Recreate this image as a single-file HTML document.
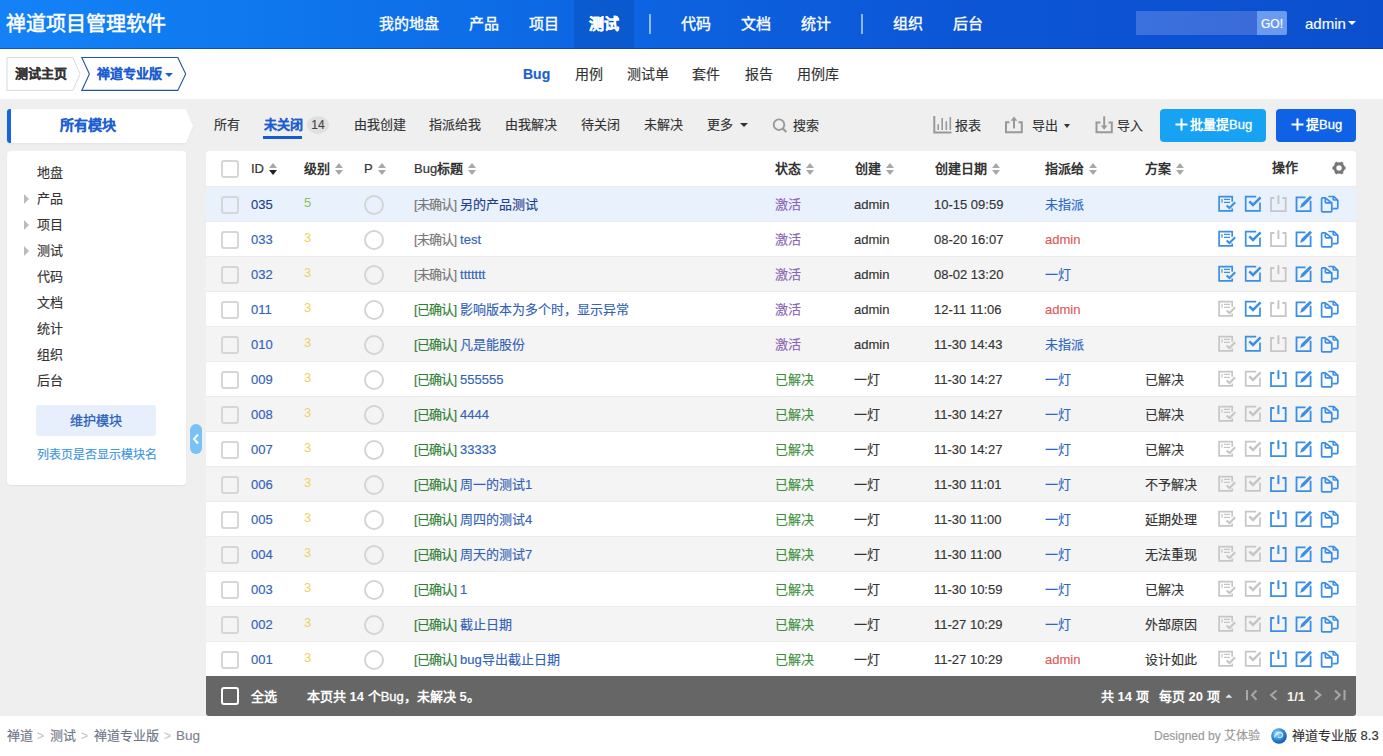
<!DOCTYPE html>
<html lang="zh-CN"><head><meta charset="utf-8">
<style>
*{box-sizing:border-box;margin:0;padding:0}
html,body{width:1383px;height:756px;overflow:hidden;background:#efefef;font-family:"Liberation Sans",sans-serif;font-size:13px;color:#333;-webkit-text-stroke-width:0.15px}
.a{position:absolute;white-space:nowrap}
#hd{position:absolute;left:0;top:0;width:1383px;height:49px;box-shadow:inset 0 -1px 0 rgba(0,20,80,.35);background:linear-gradient(90deg,#1482f6 0%,#0f7af0 15%,#0e72eb 27%,#0d62e0 48%,#0c56d6 70%,#0b4fce 100%)}
#hd .title{position:absolute;left:6px;top:11px;color:#fff;font-size:20px;line-height:26px;font-weight:normal;-webkit-text-stroke:0.5px #fff}
#hd .nav{position:absolute;top:0;height:48px;line-height:47px;color:#fff;font-size:15px;font-weight:normal;-webkit-text-stroke:0.35px #fff;text-align:center}
#hd .sep{position:absolute;top:14px;width:1.5px;height:20px;background:rgba(255,255,255,.55)}
#sub{position:absolute;left:0;top:49px;width:1383px;height:50px;background:#fff}
.sn{position:absolute;top:16px;font-size:14px;line-height:18px;color:#333}
.fb{position:absolute;top:116px;font-size:13px;line-height:18px;color:#333}
.tree{position:absolute;left:37px;font-size:13px;line-height:18px;color:#333}
.tri{position:absolute;left:24px;width:0;height:0;border-left:5px solid #bbb;border-top:5px solid transparent;border-bottom:5px solid transparent}
#tbl{position:absolute;left:206px;top:151px;width:1150px;height:565px;background:#fff;border-radius:3px 3px 3px 3px;overflow:hidden}
.th{position:absolute;top:9px;font-weight:bold;font-size:13px;line-height:18px;color:#333;-webkit-text-stroke-width:0}
.srt{display:inline-block;position:relative;width:9px;height:12px;vertical-align:-2px;margin-left:5px}
.srt:before{content:"";position:absolute;left:0;top:0;border-left:4.5px solid transparent;border-right:4.5px solid transparent;border-bottom:5px solid #a8a8a8}
.srt:after{content:"";position:absolute;left:0;top:7px;border-left:4.5px solid transparent;border-right:4.5px solid transparent;border-top:5px solid #a8a8a8}
.srt.d:after{border-top-color:#222}
.row{position:absolute;left:0;width:1150px;height:35px;border-top:1px solid #ebebeb}
.row .t{position:absolute;top:9px;line-height:18px;font-size:13px;-webkit-text-stroke-width:0.15px}
.cb{position:absolute;width:18px;height:18px;border:2px solid #d6d6d6;border-radius:3px;background:transparent}
.pc{position:absolute;left:158px;top:8px;width:20px;height:20px;border:2px solid #d4d4d4;border-radius:50%}
.ai{position:absolute}
#ft{position:absolute;left:0;top:525px;width:1150px;height:40px;background:#666;color:#fff;font-weight:bold;-webkit-text-stroke-width:0}
#ft .t{position:absolute;top:12px;line-height:18px;font-size:13px}
</style></head><body>
<div id="hd">
  <div class="title">禅道项目管理软件</div>
  <div class="nav" style="left:364px;width:90px">我的地盘</div>
  <div class="nav" style="left:454px;width:60px">产品</div>
  <div class="nav" style="left:514px;width:60px">项目</div>
  <div class="nav" style="left:574px;width:60px;font-weight:bold;background:rgba(0,40,120,.18)">测试</div>
  <div class="sep" style="left:649px"></div>
  <div class="nav" style="left:666px;width:60px">代码</div>
  <div class="nav" style="left:726px;width:60px">文档</div>
  <div class="nav" style="left:786px;width:60px">统计</div>
  <div class="sep" style="left:861px"></div>
  <div class="nav" style="left:878px;width:60px">组织</div>
  <div class="nav" style="left:938px;width:60px">后台</div>
  <div class="a" style="left:1136px;top:11px;width:121px;height:24px;background:linear-gradient(90deg,#3a71de,#3b6bd9)"></div>
  <div class="a" style="left:1257px;top:11px;width:30px;height:24px;background:#6b9bef;border-radius:0 2px 2px 0;color:#fff;font-size:12px;line-height:26px;text-align:center;-webkit-text-stroke:0.2px #fff">GO!</div>
  <div class="a" style="left:1305px;top:14px;color:#fff;font-size:15px;line-height:20px">admin</div>
  <div class="a" style="left:1348px;top:21px;border-left:4px solid transparent;border-right:4px solid transparent;border-top:4px solid #fff"></div>
</div>
<div id="sub">
  <svg class="a" style="left:6px;top:8px" width="184" height="35" viewBox="0 0 184 35">
    <path d="M1 0.5H66.8L74.1 16.9L66.8 33.4H1Z" fill="#fff" stroke="#d9d9d9" stroke-width="1"/>
    <path d="M75.8 0.5H171.8L179.7 16.9L171.8 33.4H75.8L83.4 16.9Z" fill="#fff" stroke="#2352a8" stroke-width="1.1"/>
  </svg>
  <div class="a" style="left:15px;top:16px;font-size:13px;line-height:18px;font-weight:bold;color:#333">测试主页</div>
  <div class="a" style="left:97px;top:16px;font-size:13px;line-height:18px;font-weight:bold;color:#1c5ed2">禅道专业版</div>
  <div class="a" style="left:165px;top:24px;border-left:4px solid transparent;border-right:4px solid transparent;border-top:4px solid #1c5ed2"></div>
  <div class="sn" style="left:523px;color:#1c5ed2;font-weight:bold">Bug</div>
  <div class="sn" style="left:575px">用例</div>
  <div class="sn" style="left:627px">测试单</div>
  <div class="sn" style="left:692px">套件</div>
  <div class="sn" style="left:745px">报告</div>
  <div class="sn" style="left:797px">用例库</div>
</div>

<!-- sidebar -->
<svg class="a" style="left:6px;top:108px;filter:drop-shadow(0 1px 1px rgba(0,0,0,.05))" width="190" height="37" viewBox="0 0 190 37">
  <path d="M4 1H180L187 18L180 35H4Q1 35 1 32V4Q1 1 4 1Z" fill="#fff"/>
  <path d="M4 1H5V35H4Q1 35 1 32V4Q1 1 4 1Z" fill="#1763e2"/>
</svg>
<div class="a" style="left:60px;top:116px;font-size:14px;line-height:18px;font-weight:bold;color:#1c5ed2">所有模块</div>
<div class="a" style="left:7px;top:151px;width:179px;height:334px;background:#fff;border-radius:4px;box-shadow:0 1px 2px rgba(0,0,0,.06)"></div>
<div class="tree" style="top:164px">地盘</div>
<div class="tri" style="top:194px"></div><div class="tree" style="top:190px">产品</div>
<div class="tri" style="top:220px"></div><div class="tree" style="top:216px">项目</div>
<div class="tri" style="top:246px"></div><div class="tree" style="top:242px">测试</div>
<div class="tree" style="top:268px">代码</div>
<div class="tree" style="top:294px">文档</div>
<div class="tree" style="top:320px">统计</div>
<div class="tree" style="top:346px">组织</div>
<div class="tree" style="top:372px">后台</div>
<div class="a" style="left:36px;top:405px;width:120px;height:31px;background:#e6effb;border-radius:3px;text-align:center;line-height:31px;font-size:13px;color:#2a5fba;-webkit-text-stroke:0.3px #2a5fba">维护模块</div>
<div class="a" style="left:37px;top:447px;font-size:12px;line-height:16px;color:#3c96e0">列表页是否显示模块名</div>
<div class="a" style="left:190px;top:424px;width:12px;height:30px;background:#78c2f5;border-radius:6px"></div>
<svg class="a" style="left:192px;top:433px" width="8" height="12" viewBox="0 0 8 12"><path d="M6 1.5L2 6L6 10.5" fill="none" stroke="#fff" stroke-width="2"/></svg>

<!-- filter bar -->
<div class="fb" style="left:214px">所有</div>
<div class="fb" style="left:264px;color:#1c5ed2;font-weight:bold">未关闭</div>
<div class="a" style="left:263px;top:136px;width:39px;height:2.5px;background:#1a5ad0"></div>
<div class="a" style="left:307px;top:116px;width:22px;height:18px;border-radius:50%;background:#e0e0e0;color:#444;font-size:12px;line-height:18px;text-align:center">14</div>
<div class="fb" style="left:354px">由我创建</div>
<div class="fb" style="left:429px">指派给我</div>
<div class="fb" style="left:505px">由我解决</div>
<div class="fb" style="left:581px">待关闭</div>
<div class="fb" style="left:644px">未解决</div>
<div class="fb" style="left:707px">更多</div>
<div class="a" style="left:739.5px;top:123px;border-left:4px solid transparent;border-right:4px solid transparent;border-top:4px solid #333"></div>
<svg class="a" style="left:770px;top:115px" width="20" height="20" viewBox="0 0 20 20"><circle cx="9" cy="9.7" r="5.3" fill="none" stroke="#999" stroke-width="1.9"/><path d="M12.8 13.5L16.3 17" stroke="#999" stroke-width="2.2"/></svg>
<div class="fb" style="left:793px;top:117px">搜索</div>

<svg class="a" style="left:925px;top:108px" width="240" height="36" viewBox="925 108 240 36" fill="none" stroke="#999"><path d="M934.3 116V132.4H951.5" stroke-width="2"/><path d="M938.2 124.2V130M942.2 118V130M946.3 121.2V130M950.3 117V130" stroke-width="1.6"/><path d="M1009.5 122.3H1006V132.3H1021.8V122.3H1018.5" stroke-width="2"/><path d="M1014 118.5V128.5" stroke-width="2"/><path d="M1010.6 120.8L1014 116.6L1017.4 120.8Z" fill="#999" stroke="none"/><path d="M1100.5 122.4H1096.5V132.3H1111.8V122.4H1108.5" stroke-width="2"/><path d="M1104.2 116.3V127" stroke-width="2"/><path d="M1100.8 125.6H1107.6L1104.2 129.8Z" fill="#999" stroke="none"/></svg>
<div class="fb" style="left:955px;top:117px">报表</div>

<div class="fb" style="left:1032px;top:117px">导出</div>
<div class="a" style="left:1064px;top:124px;border-left:3.5px solid transparent;border-right:3.5px solid transparent;border-top:4px solid #333"></div>

<div class="fb" style="left:1117px;top:117px">导入</div>
<div class="a" style="left:1160px;top:109px;width:106px;height:33px;background:#17a2f3;border-radius:4px"></div>
<svg class="a" style="left:1175px;top:118px" width="13" height="13" viewBox="0 0 13 13"><path d="M6.5 0.5V12.5M0.5 6.5H12.5" stroke="#fff" stroke-width="2"/></svg>
<div class="a" style="left:1190px;top:116px;color:#fff;font-size:13px;line-height:18px;font-weight:bold;-webkit-text-stroke-width:0">批量提<span style="font-weight:normal;-webkit-text-stroke:0.3px #fff">Bug</span></div>
<div class="a" style="left:1276px;top:109px;width:80px;height:33px;background:#0f62e6;border-radius:4px"></div>
<svg class="a" style="left:1291px;top:118px" width="13" height="13" viewBox="0 0 13 13"><path d="M6.5 0.5V12.5M0.5 6.5H12.5" stroke="#fff" stroke-width="2"/></svg>
<div class="a" style="left:1306px;top:116px;color:#fff;font-size:13px;line-height:18px;font-weight:bold;-webkit-text-stroke-width:0">提<span style="font-weight:normal;-webkit-text-stroke:0.3px #fff">Bug</span></div>

<!-- table -->
<div id="tbl">
  <div class="cb" style="left:15px;top:9px"></div>
  <div class="th" style="left:45px"><span style="font-weight:normal;-webkit-text-stroke:0.2px #333">ID</span><span class="srt d"></span></div>
  <div class="th" style="left:98px">级别<span class="srt"></span></div>
  <div class="th" style="left:158px"><span style="font-weight:normal;-webkit-text-stroke:0.2px #333">P</span><span class="srt"></span></div>
  <div class="th" style="left:208px"><span style="font-weight:normal;-webkit-text-stroke:0.2px #333">Bug</span>标题<span class="srt"></span></div>
  <div class="th" style="left:569px">状态<span class="srt"></span></div>
  <div class="th" style="left:649px">创建<span class="srt"></span></div>
  <div class="th" style="left:729px">创建日期<span class="srt"></span></div>
  <div class="th" style="left:839px">指派给<span class="srt"></span></div>
  <div class="th" style="left:939px">方案<span class="srt"></span></div>
  <div class="th" style="left:1066px;top:8px">操作</div>
  <svg class="a" style="left:1125px;top:9px" width="16" height="16" viewBox="0 0 16 16"><circle cx="8" cy="8" r="4.2" fill="none" stroke="#777" stroke-width="3"/><path d="M12.00 8.00L14.60 8.00M10.00 11.46L11.30 13.72M6.00 11.46L4.70 13.72M4.00 8.00L1.40 8.00M6.00 4.54L4.70 2.28M10.00 4.54L11.30 2.28" stroke="#777" stroke-width="3"/></svg>
<div class="row" style="top:35px;background:#e9f2fc">
<div class="cb" style="left:15px;top:9px"></div>
<div class="t" style="left:45px;color:#1f3d8f">035</div>
<div class="t" style="left:98px;color:#8cbf5a;font-size:13px;top:7px;-webkit-text-stroke-width:0">5</div>
<div class="pc"></div>
<div class="t" style="left:208px"><span style="color:#777;letter-spacing:-0.75px">[未确认]</span> <span style="color:#1f3d8f">另的产品测试</span></div>
<div class="t" style="left:569px;color:#8a64b8">激活</div>
<div class="t" style="left:648px;color:#333">admin</div>
<div class="t" style="left:728px;color:#333">10-15 09:59</div>
<div class="t" style="left:839px;color:#2a66c8">未指派</div>
<div class="t" style="left:939px;color:#333"></div>
<svg class="ai" style="left:1009px;top:-1px" width="130" height="35" viewBox="1215 186 130 35"><g fill="none" stroke="#3b8ee6"><path d="M1232.2 201.8V196.7H1219.1V210.9H1232.2V208.6" stroke-width="1.7"/><path d="M1222 199V202.8" stroke-width="1.2"/><path d="M1224 199.4H1230M1224 202.4H1230" stroke-width="1.3"/><path d="M1226.6 205.4L1229.5 208.1L1235.2 202.3" stroke-width="2.1"/></g><g fill="none" stroke="#3b8ee6"><path d="M1256.2 196.7H1245.7V210.9H1260V202.5" stroke-width="1.7"/><path d="M1249.3 201.4L1253 205L1260.6 197.4" stroke-width="2.5"/></g><g fill="none" stroke="#c6c6c6"><path d="M1274.3 198H1271V211.2H1285.7V198H1282.4" stroke-width="1.8"/><path d="M1278.4 195.2V204.1" stroke-width="2"/></g><g fill="none" stroke="#3b8ee6"><path d="M1305.5 197.4H1296.5V211.2H1310.6V200.7" stroke-width="1.8"/><path d="M1300 208L1301.5 203.8L1310 195.7L1312 197.7L1303.8 206.2Z" fill="#3b8ee6" stroke="none"/></g><g fill="none" stroke="#3b8ee6" stroke-linejoin="round"><path d="M1325.3 197.8H1322.6Q1321.6 197.8 1321.6 198.8V210.8Q1321.6 211.8 1322.6 211.8H1330.8Q1331.8 211.8 1331.8 210.8V203L1325.3 197.8Z" stroke-width="1.7"/><path d="M1325.3 198.5V201.8Q1325.3 202.8 1326.3 202.8H1331.5" stroke-width="1.7"/><path d="M1328.4 196.5H1333.9L1337.8 200.3V207.6Q1337.8 208.6 1336.8 208.6H1332.5" stroke-width="1.7"/><path d="M1333.2 197V199.3Q1333.2 200 1334 200H1337.4" stroke-width="1.6"/></g></svg>
</div>
<div class="row" style="top:70px;background:#fff">
<div class="cb" style="left:15px;top:9px"></div>
<div class="t" style="left:45px;color:#3262b8">033</div>
<div class="t" style="left:98px;color:#f1d060;font-size:13px;top:7px;-webkit-text-stroke-width:0">3</div>
<div class="pc"></div>
<div class="t" style="left:208px"><span style="color:#777;letter-spacing:-0.75px">[未确认]</span> <span style="color:#3262b8">test</span></div>
<div class="t" style="left:569px;color:#8a64b8">激活</div>
<div class="t" style="left:648px;color:#333">admin</div>
<div class="t" style="left:728px;color:#333">08-20 16:07</div>
<div class="t" style="left:839px;color:#e05a5a">admin</div>
<div class="t" style="left:939px;color:#333"></div>
<svg class="ai" style="left:1009px;top:-1px" width="130" height="35" viewBox="1215 186 130 35"><g fill="none" stroke="#3b8ee6"><path d="M1232.2 201.8V196.7H1219.1V210.9H1232.2V208.6" stroke-width="1.7"/><path d="M1222 199V202.8" stroke-width="1.2"/><path d="M1224 199.4H1230M1224 202.4H1230" stroke-width="1.3"/><path d="M1226.6 205.4L1229.5 208.1L1235.2 202.3" stroke-width="2.1"/></g><g fill="none" stroke="#3b8ee6"><path d="M1256.2 196.7H1245.7V210.9H1260V202.5" stroke-width="1.7"/><path d="M1249.3 201.4L1253 205L1260.6 197.4" stroke-width="2.5"/></g><g fill="none" stroke="#c6c6c6"><path d="M1274.3 198H1271V211.2H1285.7V198H1282.4" stroke-width="1.8"/><path d="M1278.4 195.2V204.1" stroke-width="2"/></g><g fill="none" stroke="#3b8ee6"><path d="M1305.5 197.4H1296.5V211.2H1310.6V200.7" stroke-width="1.8"/><path d="M1300 208L1301.5 203.8L1310 195.7L1312 197.7L1303.8 206.2Z" fill="#3b8ee6" stroke="none"/></g><g fill="none" stroke="#3b8ee6" stroke-linejoin="round"><path d="M1325.3 197.8H1322.6Q1321.6 197.8 1321.6 198.8V210.8Q1321.6 211.8 1322.6 211.8H1330.8Q1331.8 211.8 1331.8 210.8V203L1325.3 197.8Z" stroke-width="1.7"/><path d="M1325.3 198.5V201.8Q1325.3 202.8 1326.3 202.8H1331.5" stroke-width="1.7"/><path d="M1328.4 196.5H1333.9L1337.8 200.3V207.6Q1337.8 208.6 1336.8 208.6H1332.5" stroke-width="1.7"/><path d="M1333.2 197V199.3Q1333.2 200 1334 200H1337.4" stroke-width="1.6"/></g></svg>
</div>
<div class="row" style="top:105px;background:#f4f4f4">
<div class="cb" style="left:15px;top:9px"></div>
<div class="t" style="left:45px;color:#3262b8">032</div>
<div class="t" style="left:98px;color:#f1d060;font-size:13px;top:7px;-webkit-text-stroke-width:0">3</div>
<div class="pc"></div>
<div class="t" style="left:208px"><span style="color:#777;letter-spacing:-0.75px">[未确认]</span> <span style="color:#3262b8">ttttttt</span></div>
<div class="t" style="left:569px;color:#8a64b8">激活</div>
<div class="t" style="left:648px;color:#333">admin</div>
<div class="t" style="left:728px;color:#333">08-02 13:20</div>
<div class="t" style="left:839px;color:#2a66c8">一灯</div>
<div class="t" style="left:939px;color:#333"></div>
<svg class="ai" style="left:1009px;top:-1px" width="130" height="35" viewBox="1215 186 130 35"><g fill="none" stroke="#3b8ee6"><path d="M1232.2 201.8V196.7H1219.1V210.9H1232.2V208.6" stroke-width="1.7"/><path d="M1222 199V202.8" stroke-width="1.2"/><path d="M1224 199.4H1230M1224 202.4H1230" stroke-width="1.3"/><path d="M1226.6 205.4L1229.5 208.1L1235.2 202.3" stroke-width="2.1"/></g><g fill="none" stroke="#3b8ee6"><path d="M1256.2 196.7H1245.7V210.9H1260V202.5" stroke-width="1.7"/><path d="M1249.3 201.4L1253 205L1260.6 197.4" stroke-width="2.5"/></g><g fill="none" stroke="#c6c6c6"><path d="M1274.3 198H1271V211.2H1285.7V198H1282.4" stroke-width="1.8"/><path d="M1278.4 195.2V204.1" stroke-width="2"/></g><g fill="none" stroke="#3b8ee6"><path d="M1305.5 197.4H1296.5V211.2H1310.6V200.7" stroke-width="1.8"/><path d="M1300 208L1301.5 203.8L1310 195.7L1312 197.7L1303.8 206.2Z" fill="#3b8ee6" stroke="none"/></g><g fill="none" stroke="#3b8ee6" stroke-linejoin="round"><path d="M1325.3 197.8H1322.6Q1321.6 197.8 1321.6 198.8V210.8Q1321.6 211.8 1322.6 211.8H1330.8Q1331.8 211.8 1331.8 210.8V203L1325.3 197.8Z" stroke-width="1.7"/><path d="M1325.3 198.5V201.8Q1325.3 202.8 1326.3 202.8H1331.5" stroke-width="1.7"/><path d="M1328.4 196.5H1333.9L1337.8 200.3V207.6Q1337.8 208.6 1336.8 208.6H1332.5" stroke-width="1.7"/><path d="M1333.2 197V199.3Q1333.2 200 1334 200H1337.4" stroke-width="1.6"/></g></svg>
</div>
<div class="row" style="top:140px;background:#fff">
<div class="cb" style="left:15px;top:9px"></div>
<div class="t" style="left:45px;color:#3262b8">011</div>
<div class="t" style="left:98px;color:#f1d060;font-size:13px;top:7px;-webkit-text-stroke-width:0">3</div>
<div class="pc"></div>
<div class="t" style="left:208px"><span style="color:#2f7f33;letter-spacing:-0.75px">[已确认]</span> <span style="color:#3262b8">影响版本为多个时，显示异常</span></div>
<div class="t" style="left:569px;color:#8a64b8">激活</div>
<div class="t" style="left:648px;color:#333">admin</div>
<div class="t" style="left:728px;color:#333">12-11 11:06</div>
<div class="t" style="left:839px;color:#e05a5a">admin</div>
<div class="t" style="left:939px;color:#333"></div>
<svg class="ai" style="left:1009px;top:-1px" width="130" height="35" viewBox="1215 186 130 35"><g fill="none" stroke="#c6c6c6"><path d="M1232.2 201.8V196.7H1219.1V210.9H1232.2V208.6" stroke-width="1.7"/><path d="M1222 199V202.8" stroke-width="1.2"/><path d="M1224 199.4H1230M1224 202.4H1230" stroke-width="1.3"/><path d="M1226.6 205.4L1229.5 208.1L1235.2 202.3" stroke-width="2.1"/></g><g fill="none" stroke="#3b8ee6"><path d="M1256.2 196.7H1245.7V210.9H1260V202.5" stroke-width="1.7"/><path d="M1249.3 201.4L1253 205L1260.6 197.4" stroke-width="2.5"/></g><g fill="none" stroke="#c6c6c6"><path d="M1274.3 198H1271V211.2H1285.7V198H1282.4" stroke-width="1.8"/><path d="M1278.4 195.2V204.1" stroke-width="2"/></g><g fill="none" stroke="#3b8ee6"><path d="M1305.5 197.4H1296.5V211.2H1310.6V200.7" stroke-width="1.8"/><path d="M1300 208L1301.5 203.8L1310 195.7L1312 197.7L1303.8 206.2Z" fill="#3b8ee6" stroke="none"/></g><g fill="none" stroke="#3b8ee6" stroke-linejoin="round"><path d="M1325.3 197.8H1322.6Q1321.6 197.8 1321.6 198.8V210.8Q1321.6 211.8 1322.6 211.8H1330.8Q1331.8 211.8 1331.8 210.8V203L1325.3 197.8Z" stroke-width="1.7"/><path d="M1325.3 198.5V201.8Q1325.3 202.8 1326.3 202.8H1331.5" stroke-width="1.7"/><path d="M1328.4 196.5H1333.9L1337.8 200.3V207.6Q1337.8 208.6 1336.8 208.6H1332.5" stroke-width="1.7"/><path d="M1333.2 197V199.3Q1333.2 200 1334 200H1337.4" stroke-width="1.6"/></g></svg>
</div>
<div class="row" style="top:175px;background:#f4f4f4">
<div class="cb" style="left:15px;top:9px"></div>
<div class="t" style="left:45px;color:#3262b8">010</div>
<div class="t" style="left:98px;color:#f1d060;font-size:13px;top:7px;-webkit-text-stroke-width:0">3</div>
<div class="pc"></div>
<div class="t" style="left:208px"><span style="color:#2f7f33;letter-spacing:-0.75px">[已确认]</span> <span style="color:#3262b8">凡是能股份</span></div>
<div class="t" style="left:569px;color:#8a64b8">激活</div>
<div class="t" style="left:648px;color:#333">admin</div>
<div class="t" style="left:728px;color:#333">11-30 14:43</div>
<div class="t" style="left:839px;color:#2a66c8">未指派</div>
<div class="t" style="left:939px;color:#333"></div>
<svg class="ai" style="left:1009px;top:-1px" width="130" height="35" viewBox="1215 186 130 35"><g fill="none" stroke="#c6c6c6"><path d="M1232.2 201.8V196.7H1219.1V210.9H1232.2V208.6" stroke-width="1.7"/><path d="M1222 199V202.8" stroke-width="1.2"/><path d="M1224 199.4H1230M1224 202.4H1230" stroke-width="1.3"/><path d="M1226.6 205.4L1229.5 208.1L1235.2 202.3" stroke-width="2.1"/></g><g fill="none" stroke="#3b8ee6"><path d="M1256.2 196.7H1245.7V210.9H1260V202.5" stroke-width="1.7"/><path d="M1249.3 201.4L1253 205L1260.6 197.4" stroke-width="2.5"/></g><g fill="none" stroke="#c6c6c6"><path d="M1274.3 198H1271V211.2H1285.7V198H1282.4" stroke-width="1.8"/><path d="M1278.4 195.2V204.1" stroke-width="2"/></g><g fill="none" stroke="#3b8ee6"><path d="M1305.5 197.4H1296.5V211.2H1310.6V200.7" stroke-width="1.8"/><path d="M1300 208L1301.5 203.8L1310 195.7L1312 197.7L1303.8 206.2Z" fill="#3b8ee6" stroke="none"/></g><g fill="none" stroke="#3b8ee6" stroke-linejoin="round"><path d="M1325.3 197.8H1322.6Q1321.6 197.8 1321.6 198.8V210.8Q1321.6 211.8 1322.6 211.8H1330.8Q1331.8 211.8 1331.8 210.8V203L1325.3 197.8Z" stroke-width="1.7"/><path d="M1325.3 198.5V201.8Q1325.3 202.8 1326.3 202.8H1331.5" stroke-width="1.7"/><path d="M1328.4 196.5H1333.9L1337.8 200.3V207.6Q1337.8 208.6 1336.8 208.6H1332.5" stroke-width="1.7"/><path d="M1333.2 197V199.3Q1333.2 200 1334 200H1337.4" stroke-width="1.6"/></g></svg>
</div>
<div class="row" style="top:210px;background:#fff">
<div class="cb" style="left:15px;top:9px"></div>
<div class="t" style="left:45px;color:#3262b8">009</div>
<div class="t" style="left:98px;color:#f1d060;font-size:13px;top:7px;-webkit-text-stroke-width:0">3</div>
<div class="pc"></div>
<div class="t" style="left:208px"><span style="color:#2f7f33;letter-spacing:-0.75px">[已确认]</span> <span style="color:#3262b8">555555</span></div>
<div class="t" style="left:569px;color:#3b8f3b">已解决</div>
<div class="t" style="left:648px;color:#333">一灯</div>
<div class="t" style="left:728px;color:#333">11-30 14:27</div>
<div class="t" style="left:839px;color:#2a66c8">一灯</div>
<div class="t" style="left:939px;color:#333">已解决</div>
<svg class="ai" style="left:1009px;top:-1px" width="130" height="35" viewBox="1215 186 130 35"><g fill="none" stroke="#c6c6c6"><path d="M1232.2 201.8V196.7H1219.1V210.9H1232.2V208.6" stroke-width="1.7"/><path d="M1222 199V202.8" stroke-width="1.2"/><path d="M1224 199.4H1230M1224 202.4H1230" stroke-width="1.3"/><path d="M1226.6 205.4L1229.5 208.1L1235.2 202.3" stroke-width="2.1"/></g><g fill="none" stroke="#c6c6c6"><path d="M1256.2 196.7H1245.7V210.9H1260V202.5" stroke-width="1.7"/><path d="M1249.3 201.4L1253 205L1260.6 197.4" stroke-width="2.5"/></g><g fill="none" stroke="#3b8ee6"><path d="M1274.3 198H1271V211.2H1285.7V198H1282.4" stroke-width="1.8"/><path d="M1278.4 195.2V204.1" stroke-width="2"/></g><g fill="none" stroke="#3b8ee6"><path d="M1305.5 197.4H1296.5V211.2H1310.6V200.7" stroke-width="1.8"/><path d="M1300 208L1301.5 203.8L1310 195.7L1312 197.7L1303.8 206.2Z" fill="#3b8ee6" stroke="none"/></g><g fill="none" stroke="#3b8ee6" stroke-linejoin="round"><path d="M1325.3 197.8H1322.6Q1321.6 197.8 1321.6 198.8V210.8Q1321.6 211.8 1322.6 211.8H1330.8Q1331.8 211.8 1331.8 210.8V203L1325.3 197.8Z" stroke-width="1.7"/><path d="M1325.3 198.5V201.8Q1325.3 202.8 1326.3 202.8H1331.5" stroke-width="1.7"/><path d="M1328.4 196.5H1333.9L1337.8 200.3V207.6Q1337.8 208.6 1336.8 208.6H1332.5" stroke-width="1.7"/><path d="M1333.2 197V199.3Q1333.2 200 1334 200H1337.4" stroke-width="1.6"/></g></svg>
</div>
<div class="row" style="top:245px;background:#f4f4f4">
<div class="cb" style="left:15px;top:9px"></div>
<div class="t" style="left:45px;color:#3262b8">008</div>
<div class="t" style="left:98px;color:#f1d060;font-size:13px;top:7px;-webkit-text-stroke-width:0">3</div>
<div class="pc"></div>
<div class="t" style="left:208px"><span style="color:#2f7f33;letter-spacing:-0.75px">[已确认]</span> <span style="color:#3262b8">4444</span></div>
<div class="t" style="left:569px;color:#3b8f3b">已解决</div>
<div class="t" style="left:648px;color:#333">一灯</div>
<div class="t" style="left:728px;color:#333">11-30 14:27</div>
<div class="t" style="left:839px;color:#2a66c8">一灯</div>
<div class="t" style="left:939px;color:#333">已解决</div>
<svg class="ai" style="left:1009px;top:-1px" width="130" height="35" viewBox="1215 186 130 35"><g fill="none" stroke="#c6c6c6"><path d="M1232.2 201.8V196.7H1219.1V210.9H1232.2V208.6" stroke-width="1.7"/><path d="M1222 199V202.8" stroke-width="1.2"/><path d="M1224 199.4H1230M1224 202.4H1230" stroke-width="1.3"/><path d="M1226.6 205.4L1229.5 208.1L1235.2 202.3" stroke-width="2.1"/></g><g fill="none" stroke="#c6c6c6"><path d="M1256.2 196.7H1245.7V210.9H1260V202.5" stroke-width="1.7"/><path d="M1249.3 201.4L1253 205L1260.6 197.4" stroke-width="2.5"/></g><g fill="none" stroke="#3b8ee6"><path d="M1274.3 198H1271V211.2H1285.7V198H1282.4" stroke-width="1.8"/><path d="M1278.4 195.2V204.1" stroke-width="2"/></g><g fill="none" stroke="#3b8ee6"><path d="M1305.5 197.4H1296.5V211.2H1310.6V200.7" stroke-width="1.8"/><path d="M1300 208L1301.5 203.8L1310 195.7L1312 197.7L1303.8 206.2Z" fill="#3b8ee6" stroke="none"/></g><g fill="none" stroke="#3b8ee6" stroke-linejoin="round"><path d="M1325.3 197.8H1322.6Q1321.6 197.8 1321.6 198.8V210.8Q1321.6 211.8 1322.6 211.8H1330.8Q1331.8 211.8 1331.8 210.8V203L1325.3 197.8Z" stroke-width="1.7"/><path d="M1325.3 198.5V201.8Q1325.3 202.8 1326.3 202.8H1331.5" stroke-width="1.7"/><path d="M1328.4 196.5H1333.9L1337.8 200.3V207.6Q1337.8 208.6 1336.8 208.6H1332.5" stroke-width="1.7"/><path d="M1333.2 197V199.3Q1333.2 200 1334 200H1337.4" stroke-width="1.6"/></g></svg>
</div>
<div class="row" style="top:280px;background:#fff">
<div class="cb" style="left:15px;top:9px"></div>
<div class="t" style="left:45px;color:#3262b8">007</div>
<div class="t" style="left:98px;color:#f1d060;font-size:13px;top:7px;-webkit-text-stroke-width:0">3</div>
<div class="pc"></div>
<div class="t" style="left:208px"><span style="color:#2f7f33;letter-spacing:-0.75px">[已确认]</span> <span style="color:#3262b8">33333</span></div>
<div class="t" style="left:569px;color:#3b8f3b">已解决</div>
<div class="t" style="left:648px;color:#333">一灯</div>
<div class="t" style="left:728px;color:#333">11-30 14:27</div>
<div class="t" style="left:839px;color:#2a66c8">一灯</div>
<div class="t" style="left:939px;color:#333">已解决</div>
<svg class="ai" style="left:1009px;top:-1px" width="130" height="35" viewBox="1215 186 130 35"><g fill="none" stroke="#c6c6c6"><path d="M1232.2 201.8V196.7H1219.1V210.9H1232.2V208.6" stroke-width="1.7"/><path d="M1222 199V202.8" stroke-width="1.2"/><path d="M1224 199.4H1230M1224 202.4H1230" stroke-width="1.3"/><path d="M1226.6 205.4L1229.5 208.1L1235.2 202.3" stroke-width="2.1"/></g><g fill="none" stroke="#c6c6c6"><path d="M1256.2 196.7H1245.7V210.9H1260V202.5" stroke-width="1.7"/><path d="M1249.3 201.4L1253 205L1260.6 197.4" stroke-width="2.5"/></g><g fill="none" stroke="#3b8ee6"><path d="M1274.3 198H1271V211.2H1285.7V198H1282.4" stroke-width="1.8"/><path d="M1278.4 195.2V204.1" stroke-width="2"/></g><g fill="none" stroke="#3b8ee6"><path d="M1305.5 197.4H1296.5V211.2H1310.6V200.7" stroke-width="1.8"/><path d="M1300 208L1301.5 203.8L1310 195.7L1312 197.7L1303.8 206.2Z" fill="#3b8ee6" stroke="none"/></g><g fill="none" stroke="#3b8ee6" stroke-linejoin="round"><path d="M1325.3 197.8H1322.6Q1321.6 197.8 1321.6 198.8V210.8Q1321.6 211.8 1322.6 211.8H1330.8Q1331.8 211.8 1331.8 210.8V203L1325.3 197.8Z" stroke-width="1.7"/><path d="M1325.3 198.5V201.8Q1325.3 202.8 1326.3 202.8H1331.5" stroke-width="1.7"/><path d="M1328.4 196.5H1333.9L1337.8 200.3V207.6Q1337.8 208.6 1336.8 208.6H1332.5" stroke-width="1.7"/><path d="M1333.2 197V199.3Q1333.2 200 1334 200H1337.4" stroke-width="1.6"/></g></svg>
</div>
<div class="row" style="top:315px;background:#f4f4f4">
<div class="cb" style="left:15px;top:9px"></div>
<div class="t" style="left:45px;color:#3262b8">006</div>
<div class="t" style="left:98px;color:#f1d060;font-size:13px;top:7px;-webkit-text-stroke-width:0">3</div>
<div class="pc"></div>
<div class="t" style="left:208px"><span style="color:#2f7f33;letter-spacing:-0.75px">[已确认]</span> <span style="color:#3262b8">周一的测试1</span></div>
<div class="t" style="left:569px;color:#3b8f3b">已解决</div>
<div class="t" style="left:648px;color:#333">一灯</div>
<div class="t" style="left:728px;color:#333">11-30 11:01</div>
<div class="t" style="left:839px;color:#2a66c8">一灯</div>
<div class="t" style="left:939px;color:#333">不予解决</div>
<svg class="ai" style="left:1009px;top:-1px" width="130" height="35" viewBox="1215 186 130 35"><g fill="none" stroke="#c6c6c6"><path d="M1232.2 201.8V196.7H1219.1V210.9H1232.2V208.6" stroke-width="1.7"/><path d="M1222 199V202.8" stroke-width="1.2"/><path d="M1224 199.4H1230M1224 202.4H1230" stroke-width="1.3"/><path d="M1226.6 205.4L1229.5 208.1L1235.2 202.3" stroke-width="2.1"/></g><g fill="none" stroke="#c6c6c6"><path d="M1256.2 196.7H1245.7V210.9H1260V202.5" stroke-width="1.7"/><path d="M1249.3 201.4L1253 205L1260.6 197.4" stroke-width="2.5"/></g><g fill="none" stroke="#3b8ee6"><path d="M1274.3 198H1271V211.2H1285.7V198H1282.4" stroke-width="1.8"/><path d="M1278.4 195.2V204.1" stroke-width="2"/></g><g fill="none" stroke="#3b8ee6"><path d="M1305.5 197.4H1296.5V211.2H1310.6V200.7" stroke-width="1.8"/><path d="M1300 208L1301.5 203.8L1310 195.7L1312 197.7L1303.8 206.2Z" fill="#3b8ee6" stroke="none"/></g><g fill="none" stroke="#3b8ee6" stroke-linejoin="round"><path d="M1325.3 197.8H1322.6Q1321.6 197.8 1321.6 198.8V210.8Q1321.6 211.8 1322.6 211.8H1330.8Q1331.8 211.8 1331.8 210.8V203L1325.3 197.8Z" stroke-width="1.7"/><path d="M1325.3 198.5V201.8Q1325.3 202.8 1326.3 202.8H1331.5" stroke-width="1.7"/><path d="M1328.4 196.5H1333.9L1337.8 200.3V207.6Q1337.8 208.6 1336.8 208.6H1332.5" stroke-width="1.7"/><path d="M1333.2 197V199.3Q1333.2 200 1334 200H1337.4" stroke-width="1.6"/></g></svg>
</div>
<div class="row" style="top:350px;background:#fff">
<div class="cb" style="left:15px;top:9px"></div>
<div class="t" style="left:45px;color:#3262b8">005</div>
<div class="t" style="left:98px;color:#f1d060;font-size:13px;top:7px;-webkit-text-stroke-width:0">3</div>
<div class="pc"></div>
<div class="t" style="left:208px"><span style="color:#2f7f33;letter-spacing:-0.75px">[已确认]</span> <span style="color:#3262b8">周四的测试4</span></div>
<div class="t" style="left:569px;color:#3b8f3b">已解决</div>
<div class="t" style="left:648px;color:#333">一灯</div>
<div class="t" style="left:728px;color:#333">11-30 11:00</div>
<div class="t" style="left:839px;color:#2a66c8">一灯</div>
<div class="t" style="left:939px;color:#333">延期处理</div>
<svg class="ai" style="left:1009px;top:-1px" width="130" height="35" viewBox="1215 186 130 35"><g fill="none" stroke="#c6c6c6"><path d="M1232.2 201.8V196.7H1219.1V210.9H1232.2V208.6" stroke-width="1.7"/><path d="M1222 199V202.8" stroke-width="1.2"/><path d="M1224 199.4H1230M1224 202.4H1230" stroke-width="1.3"/><path d="M1226.6 205.4L1229.5 208.1L1235.2 202.3" stroke-width="2.1"/></g><g fill="none" stroke="#c6c6c6"><path d="M1256.2 196.7H1245.7V210.9H1260V202.5" stroke-width="1.7"/><path d="M1249.3 201.4L1253 205L1260.6 197.4" stroke-width="2.5"/></g><g fill="none" stroke="#3b8ee6"><path d="M1274.3 198H1271V211.2H1285.7V198H1282.4" stroke-width="1.8"/><path d="M1278.4 195.2V204.1" stroke-width="2"/></g><g fill="none" stroke="#3b8ee6"><path d="M1305.5 197.4H1296.5V211.2H1310.6V200.7" stroke-width="1.8"/><path d="M1300 208L1301.5 203.8L1310 195.7L1312 197.7L1303.8 206.2Z" fill="#3b8ee6" stroke="none"/></g><g fill="none" stroke="#3b8ee6" stroke-linejoin="round"><path d="M1325.3 197.8H1322.6Q1321.6 197.8 1321.6 198.8V210.8Q1321.6 211.8 1322.6 211.8H1330.8Q1331.8 211.8 1331.8 210.8V203L1325.3 197.8Z" stroke-width="1.7"/><path d="M1325.3 198.5V201.8Q1325.3 202.8 1326.3 202.8H1331.5" stroke-width="1.7"/><path d="M1328.4 196.5H1333.9L1337.8 200.3V207.6Q1337.8 208.6 1336.8 208.6H1332.5" stroke-width="1.7"/><path d="M1333.2 197V199.3Q1333.2 200 1334 200H1337.4" stroke-width="1.6"/></g></svg>
</div>
<div class="row" style="top:385px;background:#f4f4f4">
<div class="cb" style="left:15px;top:9px"></div>
<div class="t" style="left:45px;color:#3262b8">004</div>
<div class="t" style="left:98px;color:#f1d060;font-size:13px;top:7px;-webkit-text-stroke-width:0">3</div>
<div class="pc"></div>
<div class="t" style="left:208px"><span style="color:#2f7f33;letter-spacing:-0.75px">[已确认]</span> <span style="color:#3262b8">周天的测试7</span></div>
<div class="t" style="left:569px;color:#3b8f3b">已解决</div>
<div class="t" style="left:648px;color:#333">一灯</div>
<div class="t" style="left:728px;color:#333">11-30 11:00</div>
<div class="t" style="left:839px;color:#2a66c8">一灯</div>
<div class="t" style="left:939px;color:#333">无法重现</div>
<svg class="ai" style="left:1009px;top:-1px" width="130" height="35" viewBox="1215 186 130 35"><g fill="none" stroke="#c6c6c6"><path d="M1232.2 201.8V196.7H1219.1V210.9H1232.2V208.6" stroke-width="1.7"/><path d="M1222 199V202.8" stroke-width="1.2"/><path d="M1224 199.4H1230M1224 202.4H1230" stroke-width="1.3"/><path d="M1226.6 205.4L1229.5 208.1L1235.2 202.3" stroke-width="2.1"/></g><g fill="none" stroke="#c6c6c6"><path d="M1256.2 196.7H1245.7V210.9H1260V202.5" stroke-width="1.7"/><path d="M1249.3 201.4L1253 205L1260.6 197.4" stroke-width="2.5"/></g><g fill="none" stroke="#3b8ee6"><path d="M1274.3 198H1271V211.2H1285.7V198H1282.4" stroke-width="1.8"/><path d="M1278.4 195.2V204.1" stroke-width="2"/></g><g fill="none" stroke="#3b8ee6"><path d="M1305.5 197.4H1296.5V211.2H1310.6V200.7" stroke-width="1.8"/><path d="M1300 208L1301.5 203.8L1310 195.7L1312 197.7L1303.8 206.2Z" fill="#3b8ee6" stroke="none"/></g><g fill="none" stroke="#3b8ee6" stroke-linejoin="round"><path d="M1325.3 197.8H1322.6Q1321.6 197.8 1321.6 198.8V210.8Q1321.6 211.8 1322.6 211.8H1330.8Q1331.8 211.8 1331.8 210.8V203L1325.3 197.8Z" stroke-width="1.7"/><path d="M1325.3 198.5V201.8Q1325.3 202.8 1326.3 202.8H1331.5" stroke-width="1.7"/><path d="M1328.4 196.5H1333.9L1337.8 200.3V207.6Q1337.8 208.6 1336.8 208.6H1332.5" stroke-width="1.7"/><path d="M1333.2 197V199.3Q1333.2 200 1334 200H1337.4" stroke-width="1.6"/></g></svg>
</div>
<div class="row" style="top:420px;background:#fff">
<div class="cb" style="left:15px;top:9px"></div>
<div class="t" style="left:45px;color:#3262b8">003</div>
<div class="t" style="left:98px;color:#f1d060;font-size:13px;top:7px;-webkit-text-stroke-width:0">3</div>
<div class="pc"></div>
<div class="t" style="left:208px"><span style="color:#2f7f33;letter-spacing:-0.75px">[已确认]</span> <span style="color:#3262b8">1</span></div>
<div class="t" style="left:569px;color:#3b8f3b">已解决</div>
<div class="t" style="left:648px;color:#333">一灯</div>
<div class="t" style="left:728px;color:#333">11-30 10:59</div>
<div class="t" style="left:839px;color:#2a66c8">一灯</div>
<div class="t" style="left:939px;color:#333">已解决</div>
<svg class="ai" style="left:1009px;top:-1px" width="130" height="35" viewBox="1215 186 130 35"><g fill="none" stroke="#c6c6c6"><path d="M1232.2 201.8V196.7H1219.1V210.9H1232.2V208.6" stroke-width="1.7"/><path d="M1222 199V202.8" stroke-width="1.2"/><path d="M1224 199.4H1230M1224 202.4H1230" stroke-width="1.3"/><path d="M1226.6 205.4L1229.5 208.1L1235.2 202.3" stroke-width="2.1"/></g><g fill="none" stroke="#c6c6c6"><path d="M1256.2 196.7H1245.7V210.9H1260V202.5" stroke-width="1.7"/><path d="M1249.3 201.4L1253 205L1260.6 197.4" stroke-width="2.5"/></g><g fill="none" stroke="#3b8ee6"><path d="M1274.3 198H1271V211.2H1285.7V198H1282.4" stroke-width="1.8"/><path d="M1278.4 195.2V204.1" stroke-width="2"/></g><g fill="none" stroke="#3b8ee6"><path d="M1305.5 197.4H1296.5V211.2H1310.6V200.7" stroke-width="1.8"/><path d="M1300 208L1301.5 203.8L1310 195.7L1312 197.7L1303.8 206.2Z" fill="#3b8ee6" stroke="none"/></g><g fill="none" stroke="#3b8ee6" stroke-linejoin="round"><path d="M1325.3 197.8H1322.6Q1321.6 197.8 1321.6 198.8V210.8Q1321.6 211.8 1322.6 211.8H1330.8Q1331.8 211.8 1331.8 210.8V203L1325.3 197.8Z" stroke-width="1.7"/><path d="M1325.3 198.5V201.8Q1325.3 202.8 1326.3 202.8H1331.5" stroke-width="1.7"/><path d="M1328.4 196.5H1333.9L1337.8 200.3V207.6Q1337.8 208.6 1336.8 208.6H1332.5" stroke-width="1.7"/><path d="M1333.2 197V199.3Q1333.2 200 1334 200H1337.4" stroke-width="1.6"/></g></svg>
</div>
<div class="row" style="top:455px;background:#f4f4f4">
<div class="cb" style="left:15px;top:9px"></div>
<div class="t" style="left:45px;color:#3262b8">002</div>
<div class="t" style="left:98px;color:#f1d060;font-size:13px;top:7px;-webkit-text-stroke-width:0">3</div>
<div class="pc"></div>
<div class="t" style="left:208px"><span style="color:#2f7f33;letter-spacing:-0.75px">[已确认]</span> <span style="color:#3262b8">截止日期</span></div>
<div class="t" style="left:569px;color:#3b8f3b">已解决</div>
<div class="t" style="left:648px;color:#333">一灯</div>
<div class="t" style="left:728px;color:#333">11-27 10:29</div>
<div class="t" style="left:839px;color:#2a66c8">一灯</div>
<div class="t" style="left:939px;color:#333">外部原因</div>
<svg class="ai" style="left:1009px;top:-1px" width="130" height="35" viewBox="1215 186 130 35"><g fill="none" stroke="#c6c6c6"><path d="M1232.2 201.8V196.7H1219.1V210.9H1232.2V208.6" stroke-width="1.7"/><path d="M1222 199V202.8" stroke-width="1.2"/><path d="M1224 199.4H1230M1224 202.4H1230" stroke-width="1.3"/><path d="M1226.6 205.4L1229.5 208.1L1235.2 202.3" stroke-width="2.1"/></g><g fill="none" stroke="#c6c6c6"><path d="M1256.2 196.7H1245.7V210.9H1260V202.5" stroke-width="1.7"/><path d="M1249.3 201.4L1253 205L1260.6 197.4" stroke-width="2.5"/></g><g fill="none" stroke="#3b8ee6"><path d="M1274.3 198H1271V211.2H1285.7V198H1282.4" stroke-width="1.8"/><path d="M1278.4 195.2V204.1" stroke-width="2"/></g><g fill="none" stroke="#3b8ee6"><path d="M1305.5 197.4H1296.5V211.2H1310.6V200.7" stroke-width="1.8"/><path d="M1300 208L1301.5 203.8L1310 195.7L1312 197.7L1303.8 206.2Z" fill="#3b8ee6" stroke="none"/></g><g fill="none" stroke="#3b8ee6" stroke-linejoin="round"><path d="M1325.3 197.8H1322.6Q1321.6 197.8 1321.6 198.8V210.8Q1321.6 211.8 1322.6 211.8H1330.8Q1331.8 211.8 1331.8 210.8V203L1325.3 197.8Z" stroke-width="1.7"/><path d="M1325.3 198.5V201.8Q1325.3 202.8 1326.3 202.8H1331.5" stroke-width="1.7"/><path d="M1328.4 196.5H1333.9L1337.8 200.3V207.6Q1337.8 208.6 1336.8 208.6H1332.5" stroke-width="1.7"/><path d="M1333.2 197V199.3Q1333.2 200 1334 200H1337.4" stroke-width="1.6"/></g></svg>
</div>
<div class="row" style="top:490px;background:#fff">
<div class="cb" style="left:15px;top:9px"></div>
<div class="t" style="left:45px;color:#3262b8">001</div>
<div class="t" style="left:98px;color:#f1d060;font-size:13px;top:7px;-webkit-text-stroke-width:0">3</div>
<div class="pc"></div>
<div class="t" style="left:208px"><span style="color:#2f7f33;letter-spacing:-0.75px">[已确认]</span> <span style="color:#3262b8">bug导出截止日期</span></div>
<div class="t" style="left:569px;color:#3b8f3b">已解决</div>
<div class="t" style="left:648px;color:#333">一灯</div>
<div class="t" style="left:728px;color:#333">11-27 10:29</div>
<div class="t" style="left:839px;color:#e05a5a">admin</div>
<div class="t" style="left:939px;color:#333">设计如此</div>
<svg class="ai" style="left:1009px;top:-1px" width="130" height="35" viewBox="1215 186 130 35"><g fill="none" stroke="#c6c6c6"><path d="M1232.2 201.8V196.7H1219.1V210.9H1232.2V208.6" stroke-width="1.7"/><path d="M1222 199V202.8" stroke-width="1.2"/><path d="M1224 199.4H1230M1224 202.4H1230" stroke-width="1.3"/><path d="M1226.6 205.4L1229.5 208.1L1235.2 202.3" stroke-width="2.1"/></g><g fill="none" stroke="#c6c6c6"><path d="M1256.2 196.7H1245.7V210.9H1260V202.5" stroke-width="1.7"/><path d="M1249.3 201.4L1253 205L1260.6 197.4" stroke-width="2.5"/></g><g fill="none" stroke="#3b8ee6"><path d="M1274.3 198H1271V211.2H1285.7V198H1282.4" stroke-width="1.8"/><path d="M1278.4 195.2V204.1" stroke-width="2"/></g><g fill="none" stroke="#3b8ee6"><path d="M1305.5 197.4H1296.5V211.2H1310.6V200.7" stroke-width="1.8"/><path d="M1300 208L1301.5 203.8L1310 195.7L1312 197.7L1303.8 206.2Z" fill="#3b8ee6" stroke="none"/></g><g fill="none" stroke="#3b8ee6" stroke-linejoin="round"><path d="M1325.3 197.8H1322.6Q1321.6 197.8 1321.6 198.8V210.8Q1321.6 211.8 1322.6 211.8H1330.8Q1331.8 211.8 1331.8 210.8V203L1325.3 197.8Z" stroke-width="1.7"/><path d="M1325.3 198.5V201.8Q1325.3 202.8 1326.3 202.8H1331.5" stroke-width="1.7"/><path d="M1328.4 196.5H1333.9L1337.8 200.3V207.6Q1337.8 208.6 1336.8 208.6H1332.5" stroke-width="1.7"/><path d="M1333.2 197V199.3Q1333.2 200 1334 200H1337.4" stroke-width="1.6"/></g></svg>
</div>
  <div id="ft">
    <div class="cb" style="left:15px;top:11px;background:transparent;border-color:#fff"></div>
    <div class="t" style="left:45px">全选</div>
    <div class="t" style="left:101px">本页共 14 个<span style="font-weight:normal;-webkit-text-stroke:0.3px #fff">Bug</span>，未解决 5。</div>
    <div class="t" style="left:895px">共 14 项</div>
    <div class="t" style="left:953px">每页 20 项</div>
    <svg class="a" style="left:1009px;top:0px" width="141" height="40" viewBox="1215 676 141 40"><path d="M1225.4 697.8L1228.85 694.2L1232.3 697.8Z" fill="#e6e6e6"/><g fill="none" stroke="#a8a8a8" stroke-width="2"><path d="M1247 690V700.2"/><path d="M1256.5 690.5L1252 695.1L1256.5 699.7"/><path d="M1276.5 690.5L1271 695.1L1276.5 699.7"/><path d="M1314.9 690.5L1320.4 695.1L1314.9 699.7"/><path d="M1335 690.5L1339.8 695.1L1335 699.7"/><path d="M1344.5 690V700.2"/></g></svg>
    <div class="t" style="left:1081px;color:#f4f1e8">1/1</div>
  </div>
</div>

<!-- bottom -->
<div class="a" style="left:0;top:716px;width:1383px;height:40px;background:#fff"></div>
<div class="a" style="left:7px;top:727px;font-size:13px;line-height:18px;color:#6f7689">禅道</div>
<div class="a" style="left:37px;top:727px;font-size:12px;line-height:18px;color:#c8c8c8">&gt;</div>
<div class="a" style="left:50px;top:727px;font-size:13px;line-height:18px;color:#6f7689">测试</div>
<div class="a" style="left:81px;top:727px;font-size:12px;line-height:18px;color:#c8c8c8">&gt;</div>
<div class="a" style="left:94px;top:727px;font-size:13px;line-height:18px;color:#6f7689">禅道专业版</div>
<div class="a" style="left:164px;top:727px;font-size:12px;line-height:18px;color:#c8c8c8">&gt;</div>
<div class="a" style="left:176px;top:727px;font-size:13.5px;line-height:18px;color:#7c8294">Bug</div>
<div class="a" style="left:1154px;top:728px;font-size:12px;line-height:16px;color:#999">Designed by 艾体验</div>
<svg class="a" style="left:1271px;top:728px" width="16" height="16" viewBox="0 0 16 16"><defs><radialGradient id="lg" cx="40%" cy="35%" r="70%"><stop offset="0" stop-color="#bfe6ff"/><stop offset=".45" stop-color="#3a9ae6"/><stop offset="1" stop-color="#0b4f9f"/></radialGradient></defs><circle cx="8" cy="8" r="7.8" fill="url(#lg)"/><path d="M3.5 9.5Q4.5 4 9.5 4.5Q12.5 5.5 11 8.5Q9 10.5 7 9" fill="none" stroke="#e8f6ff" stroke-width="1.4" opacity=".8"/></svg>
<div class="a" style="left:1292px;top:727px;font-size:13px;line-height:18px;color:#333">禅道专业版 8.3</div>
</body></html>
